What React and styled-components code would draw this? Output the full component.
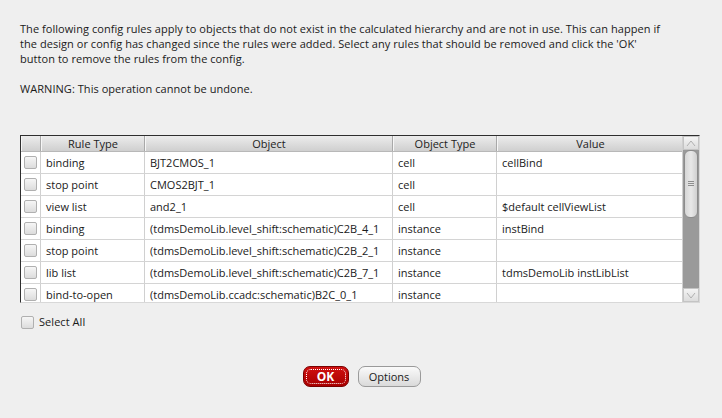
import React from 'react';
import styled, { createGlobalStyle } from 'styled-components';

const GlobalStyle = createGlobalStyle`
  html, body {
    margin: 0;
    padding: 0;
    background: #efefef;
  }
  body {
    font-family: "Open Sans", "DejaVu Sans", sans-serif;
    font-size: 11px;
    color: #1a1a1a;
  }
`;

const Dialog = styled.div`
  width: 722px;
  height: 418px;
  box-sizing: border-box;
  padding: 21px 20px 0 20px;
  display: flex;
  flex-direction: column;
  background: #efefef;
`;

const Message = styled.p`
  margin: 0;
  line-height: 15px;
  letter-spacing: 0.05px;
  white-space: pre-line;
`;

const Warning = styled.p`
  margin: 15px 0 0 0;
  line-height: 15px;
  letter-spacing: 0.05px;
`;

const Frame = styled.div`
  margin-top: 39px;
  width: 680px;
  height: 168px;
  box-sizing: border-box;
  border-top: 1px solid #2e2e2e;
  border-left: 1px solid #2e2e2e;
  border-right: 1px solid #d8d8d8;
  border-bottom: 1px solid #d8d8d8;
  display: flex;
  overflow: hidden;
  background: #fff;
`;

const TableArea = styled.div`
  flex: 1;
  display: flex;
  flex-direction: column;
  overflow: hidden;
`;

const cols = '20px 104px 248px 104px 186px';

const HeaderRow = styled.div`
  display: grid;
  grid-template-columns: ${cols};
  height: 16px;
  box-sizing: border-box;
  flex-shrink: 0;
  background: linear-gradient(#ececec, #cfcfcf);
  border-bottom: 1px solid #b8b8b8;
`;

const HeaderCell = styled.div`
  text-align: center;
  line-height: 15px;
  border-right: 1px solid #a8a8a8;
  border-left: 1px solid #f6f6f6;
  color: #222;
  &:last-child { border-right: none; }
`;

const Row = styled.div`
  display: grid;
  grid-template-columns: ${cols};
  height: 22px;
  flex-shrink: 0;
  border-bottom: 1px solid #d4d4d4;
  box-sizing: border-box;
`;

const Cell = styled.div`
  padding-left: 5px;
  line-height: 21px;
  border-right: 1px solid #d0d0d0;
  white-space: nowrap;
  overflow: hidden;
  &:last-child { border-right: none; }
`;

const CheckCell = styled.div`
  display: flex;
  align-items: center;
  justify-content: center;
  border-right: 1px solid #d0d0d0;
`;

const Box = styled.span`
  display: inline-block;
  width: 11px;
  height: 11px;
  border: 1px solid #b0b0b0;
  border-radius: 2px;
  background: linear-gradient(#f6f6f6, #dcdcdc);
  box-sizing: content-box;
`;

const ScrollBar = styled.div`
  width: 16px;
  display: flex;
  flex-direction: column;
  background: #9a9a9a;
  border-left: 1px solid #cfcfcf;
`;

const Arrow = styled.div`
  height: 14px;
  background: linear-gradient(#f4f4f4, #dcdcdc);
  display: flex;
  align-items: center;
  justify-content: center;
  border: 1px solid #c4c4c4;
  box-sizing: border-box;
`;

const Handle = styled.div`
  height: 68px;
  margin: 0 1px;
  border-radius: 6px;
  background: linear-gradient(90deg, #d6d6d6, #e8e8e8 50%, #d0d0d0);
  border: 1px solid #8c8c8c;
  box-sizing: border-box;
  display: flex;
  align-items: center;
  justify-content: center;
`;

const Grip = styled.div`
  width: 6px;
  height: 6px;
  background: repeating-linear-gradient(#8e8e8e 0 1px, transparent 1px 2px);
`;

const Track = styled.div`
  flex: 1;
`;

const SelectAll = styled.label`
  display: flex;
  align-items: center;
  gap: 5px;
  margin-top: 12px;
  margin-left: 1px;
  line-height: 14px;
  letter-spacing: 0.05px;
`;

const Buttons = styled.div`
  display: flex;
  justify-content: center;
  gap: 9px;
  margin-top: 37px;
  padding-left: 1px;
`;

const Button = styled.button`
  height: 21px;
  padding: 0 ${p => (p.$primary ? '13px' : '10px')};
  min-width: ${p => (p.$primary ? '46px' : '63px')};
  border-radius: 7px;
  font-family: "Open Sans", "DejaVu Sans", sans-serif;
  font-size: ${p => (p.$primary ? '12px' : '11px')};
  font-weight: ${p => (p.$primary ? 'bold' : 'normal')};
  color: ${p => (p.$primary ? '#fff' : '#1a1a1a')};
  border: 1px solid ${p => (p.$primary ? '#7a0000' : '#9a9a9a')};
  background: ${p =>
    p.$primary
      ? 'linear-gradient(#d01010, #a80000)'
      : 'linear-gradient(#fafafa, #dadada)'};
  position: relative;
  cursor: pointer;
  ${p =>
    p.$primary &&
    `&::after {
      content: '';
      position: absolute;
      inset: 2px;
      border: 1px dotted #fff;
      border-radius: 5px;
    }`}
`;

const rows = [
  ['binding', 'BJT2CMOS_1', 'cell', 'cellBind'],
  ['stop point', 'CMOS2BJT_1', 'cell', ''],
  ['view list', 'and2_1', 'cell', '$default cellViewList'],
  ['binding', '(tdmsDemoLib.level_shift:schematic)C2B_4_1', 'instance', 'instBind'],
  ['stop point', '(tdmsDemoLib.level_shift:schematic)C2B_2_1', 'instance', ''],
  ['lib list', '(tdmsDemoLib.level_shift:schematic)C2B_7_1', 'instance', 'tdmsDemoLib instLibList'],
  ['bind-to-open', '(tdmsDemoLib.ccadc:schematic)B2C_0_1', 'instance', ''],
];

export default function App() {
  return (
    <>
      <GlobalStyle />
      <Dialog>
        <Message>
          {"The following config rules apply to objects that do not exist in the calculated hierarchy and are not in use. This can happen if\nthe design or config has changed since the rules were added. Select any rules that should be removed and click the 'OK'\nbutton to remove the rules from the config."}
        </Message>
        <Warning>WARNING: This operation cannot be undone.</Warning>
        <Frame>
          <TableArea>
            <HeaderRow>
              <HeaderCell />
              <HeaderCell>Rule Type</HeaderCell>
              <HeaderCell>Object</HeaderCell>
              <HeaderCell>Object Type</HeaderCell>
              <HeaderCell>Value</HeaderCell>
            </HeaderRow>
            {rows.map((r, i) => (
              <Row key={i}>
                <CheckCell><Box /></CheckCell>
                <Cell>{r[0]}</Cell>
                <Cell>{r[1]}</Cell>
                <Cell>{r[2]}</Cell>
                <Cell>{r[3]}</Cell>
              </Row>
            ))}
          </TableArea>
          <ScrollBar>
            <Arrow>
              <svg width="10" height="7" viewBox="0 0 10 7">
                <path d="M1 6 L5 1 L9 6" fill="none" stroke="#b0b0b0" strokeWidth="1" />
              </svg>
            </Arrow>
            <Handle><Grip /></Handle>
            <Track />
            <Arrow>
              <svg width="10" height="7" viewBox="0 0 10 7">
                <path d="M1 1 L5 6 L9 1" fill="none" stroke="#b0b0b0" strokeWidth="1" />
              </svg>
            </Arrow>
          </ScrollBar>
        </Frame>
        <SelectAll>
          <Box />
          Select All
        </SelectAll>
        <Buttons>
          <Button $primary>OK</Button>
          <Button>Options</Button>
        </Buttons>
      </Dialog>
    </>
  );
}
